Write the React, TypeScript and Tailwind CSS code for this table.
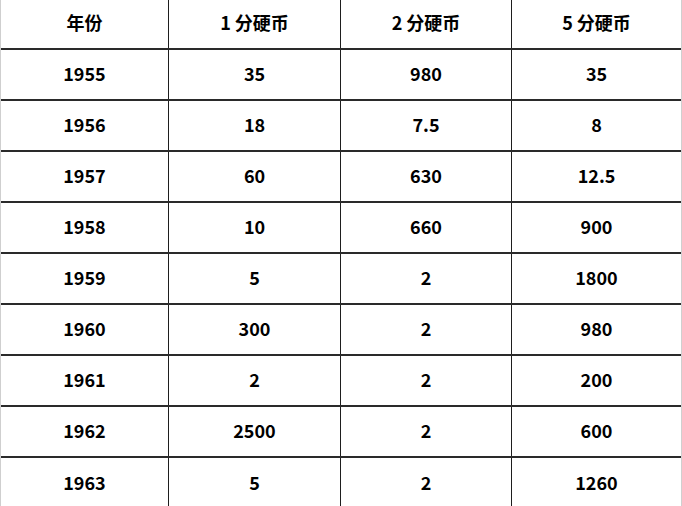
import React from 'react';

const rows: string[][] = [
  ['1955', '35', '980', '35'],
  ['1956', '18', '7.5', '8'],
  ['1957', '60', '630', '12.5'],
  ['1958', '10', '660', '900'],
  ['1959', '5', '2', '1800'],
  ['1960', '300', '2', '980'],
  ['1961', '2', '2', '200'],
  ['1962', '2500', '2', '600'],
  ['1963', '5', '2', '1260'],
];

const header = ['年份', '1 分硬币', '2 分硬币', '5 分硬币'];

function Row({ cells, head, last }: { cells: string[]; head?: boolean; last?: boolean }) {
  return (
    <div
      className={
        'flex shrink-0 ' +
        (head ? 'h-[50px] ' : 'h-[51px] ') +
        (last ? '' : 'border-b-2 border-[#2a2a2a]')
      }
    >
      <div className="w-[168px] shrink-0 flex items-center justify-center pb-[3px] border-r border-[#1e1e1e]">{cells[0]}</div>
      <div className="w-[172px] shrink-0 flex items-center justify-center pb-[3px] border-r border-[#1e1e1e]">{cells[1]}</div>
      <div className="w-[171px] shrink-0 flex items-center justify-center pb-[3px] border-r border-[#1e1e1e]">{cells[2]}</div>
      <div className="flex-1 flex items-center justify-center pb-[3px]">{cells[3]}</div>
    </div>
  );
}

export default function App() {
  return (
    <div
      className="w-[682px] h-[506px] overflow-hidden bg-white border-l border-r border-[#cfcfcf] flex flex-col text-[18px] font-bold text-black"
      style={{ fontFamily: '"Noto Sans CJK SC", "Noto Sans", sans-serif' }}
    >
      <Row cells={header} head />
      {rows.map((r, i) => (
        <Row key={i} cells={r} last={i === rows.length - 1} />
      ))}
    </div>
  );
}
